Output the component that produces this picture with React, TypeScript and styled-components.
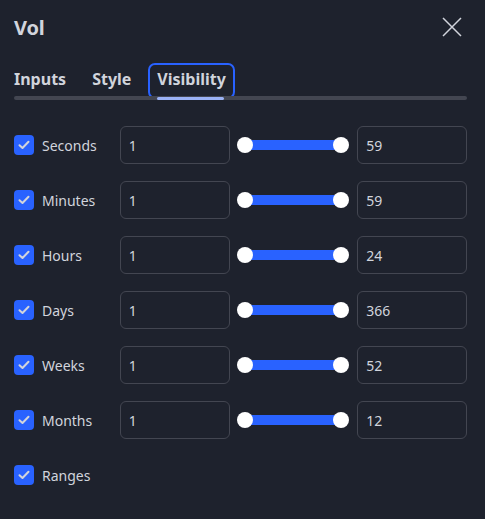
import React from 'react'
import styled, { createGlobalStyle } from 'styled-components'

const GlobalStyle = createGlobalStyle`
  html, body {
    margin: 0;
    padding: 0;
    background: #1e222d;
  }
  body {
    font-family: "Noto Sans", "Open Sans", sans-serif;
    color: #d1d4dc;
  }
`

const Dialog = styled.div`
  width: 485px;
  height: 519px;
  box-sizing: border-box;
  background: #1e222d;
  padding: 0 18px 0 14px;
  display: flex;
  flex-direction: column;
`

const Header = styled.div`
  height: 54px;
  display: flex;
  align-items: center;
  justify-content: space-between;
`

const Title = styled.h1`
  margin: 0;
  font-size: 20px;
  font-weight: 700;
  color: #d1d4dc;
  letter-spacing: -0.2px;
`

const CloseButton = styled.button`
  width: 24px;
  height: 24px;
  padding: 0;
  margin-right: 3px;
  border: none;
  background: none;
  display: flex;
  align-items: center;
  justify-content: center;
  cursor: pointer;
`

const TabBar = styled.div`
  position: relative;
  display: flex;
  align-items: flex-start;
  height: 46px;

  &::after {
    content: '';
    position: absolute;
    left: 0;
    right: 0;
    bottom: 0;
    height: 4px;
    border-radius: 2px;
    background: #434651;
  }
`

const Tab = styled.button<{ $active?: boolean }>`
  position: relative;
  height: 36px;
  margin-top: 9px;
  padding: 0 7px 5px;
  margin-right: 8px;
  background: none;
  font-family: inherit;
  font-size: 16px;
  font-weight: 700;
  color: #d1d4dc;
  border: 2px solid ${p => (p.$active ? '#2962ff' : 'transparent')};
  border-radius: 7px;
  cursor: pointer;

  &:first-child {
    margin-left: -9px;
  }

  &::after {
    content: '';
    display: ${p => (p.$active ? 'block' : 'none')};
    position: absolute;
    left: 7px;
    right: 9px;
    bottom: -3px;
    height: 3px;
    border-radius: 2px;
    background: #9bb2f5;
    z-index: 1;
  }
`

const Rows = styled.div`
  display: flex;
  flex-direction: column;
  gap: 17px;
  margin-top: 26px;
`

const Row = styled.div`
  display: flex;
  align-items: center;
  height: 38px;
`

const CheckLabel = styled.label`
  width: 106px;
  display: flex;
  align-items: center;
  gap: 8px;
  font-size: 14px;
  color: #d1d4dc;
`

const Box = styled.span`
  width: 20px;
  height: 20px;
  border-radius: 4px;
  background: #2962ff;
  display: flex;
  align-items: center;
  justify-content: center;
`

const NumberInput = styled.div`
  width: 110px;
  height: 38px;
  box-sizing: border-box;
  border: 1px solid #434651;
  border-radius: 6px;
  display: flex;
  align-items: center;
  padding-left: 8px;
  font-size: 14px;
  color: #d1d4dc;
`

const Slider = styled.div`
  position: relative;
  width: 113px;
  height: 38px;
  margin: 0 8px 0 7px;
`

const Track = styled.div`
  position: absolute;
  left: 8px;
  right: 8px;
  top: 14px;
  height: 10px;
  background: #2962ff;
`

const Knob = styled.div<{ $side: 'left' | 'right' }>`
  position: absolute;
  top: 11px;
  ${p => p.$side}: 0;
  width: 16px;
  height: 16px;
  border-radius: 50%;
  background: #ffffff;
`

const Check = () => (
  <Box>
    <svg width="12" height="10" viewBox="0 0 12 10" fill="none">
      <path d="M1.5 5.2 L4.5 8 L10.5 1.8" stroke="#d1d4dc" strokeWidth="2" strokeLinecap="round" strokeLinejoin="round" />
    </svg>
  </Box>
)

const rows = [
  { label: 'Seconds', min: 1, max: 59 },
  { label: 'Minutes', min: 1, max: 59 },
  { label: 'Hours', min: 1, max: 24 },
  { label: 'Days', min: 1, max: 366 },
  { label: 'Weeks', min: 1, max: 52 },
  { label: 'Months', min: 1, max: 12 },
]

export default function App() {
  return (
    <>
      <GlobalStyle />
      <Dialog>
        <Header>
          <Title>Vol</Title>
          <CloseButton aria-label="Close">
            <svg width="20" height="20" viewBox="0 0 20 20">
              <path d="M1 1 L19 19 M19 1 L1 19" stroke="#d1d4dc" strokeWidth="1.5" />
            </svg>
          </CloseButton>
        </Header>
        <TabBar>
          <Tab>Inputs</Tab>
          <Tab>Style</Tab>
          <Tab $active>Visibility</Tab>
        </TabBar>
        <Rows>
          {rows.map(r => (
            <Row key={r.label}>
              <CheckLabel>
                <Check />
                {r.label}
              </CheckLabel>
              <NumberInput>{r.min}</NumberInput>
              <Slider>
                <Track />
                <Knob $side="left" />
                <Knob $side="right" />
              </Slider>
              <NumberInput>{r.max}</NumberInput>
            </Row>
          ))}
          <Row>
            <CheckLabel>
              <Check />
              Ranges
            </CheckLabel>
          </Row>
        </Rows>
      </Dialog>
    </>
  )
}
